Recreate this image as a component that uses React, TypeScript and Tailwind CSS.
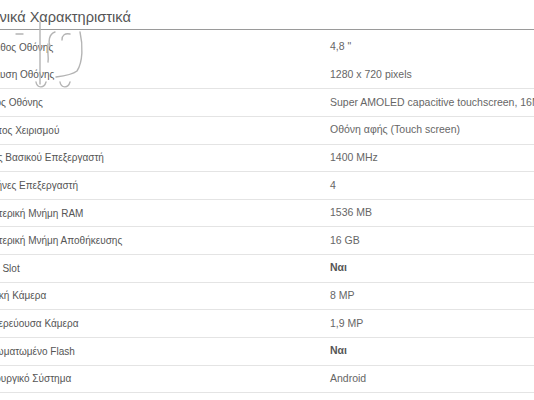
import React from "react";

const rows: { label: string; value: string; bold?: boolean }[] = [
  { label: "Μέγεθος Οθόνης", value: "4,8 \"" },
  { label: "Ανάλυση Οθόνης", value: "1280 x 720 pixels" },
  { label: "Τύπος Οθόνης", value: "Super AMOLED capacitive touchscreen, 16M colors" },
  { label: "Τρόπος Χειρισμού", value: "Οθόνη αφής (Touch screen)" },
  { label: "Ισχύς Βασικού Επεξεργαστή", value: "1400 MHz" },
  { label: "Πυρήνες Επεξεργαστή", value: "4" },
  { label: "Εσωτερική Μνήμη RAM", value: "1536 MB" },
  { label: "Εσωτερική Μνήμη Αποθήκευσης", value: "16 GB" },
  { label: "Card Slot", value: "Ναι", bold: true },
  { label: "Βασική Κάμερα", value: "8 MP" },
  { label: "Δευτερεύουσα Κάμερα", value: "1,9 MP" },
  { label: "Ενσωματωμένο Flash", value: "Ναι", bold: true },
  { label: "Λειτουργικό Σύστημα", value: "Android" },
];

export default function App() {
  return (
    <div className="relative w-[534px] h-[400px] overflow-hidden bg-white font-['Liberation_Sans',Arial,sans-serif]">
      <div className="ml-[-22px] w-[620px]">
        <div className="h-[30px] border-b border-[#9a9a9a] flex items-end pb-[3px]">
          <h2 className="text-[14.6px] leading-[18px] text-[#555]">Τεχνικά Χαρακτηριστικά</h2>
        </div>
        <div className="mt-[4px]">
          {rows.map((r, i) => (
            <div
              key={i}
              className={`grid grid-cols-[352px_1fr] items-center h-[27.64px] ${
                i === 0 ? "border-b border-transparent" : "border-b border-[#e4e4e4]"
              }`}
            >
              <div className="text-[10px] text-[#555] whitespace-nowrap">{r.label}</div>
              <div
                className={`text-[10.5px] whitespace-nowrap ${
                  r.bold ? "font-bold text-[#555]" : "text-[#666]"
                }`}
              >
                {r.value}
              </div>
            </div>
          ))}
        </div>
      </div>
      <svg
        className="absolute left-0 top-0 pointer-events-none"
        width="100"
        height="100"
        viewBox="0 0 100 100"
        fill="none"
      >
        <g stroke="#b4b4b4" strokeWidth="1.4" strokeLinecap="round">
          <path d="M16 34 L23 34" />
          <path d="M40 22 L40 84" />
          <path d="M55 32 C49 34 48 42 50 46" />
          <path d="M62 40 C62 35 65 33 70 34" />
          <path d="M80 32 C83 45 83 62 77 71 C72 75 64 76 56 77" />
          <path d="M48 44 C47 52 49 58 48 62" />
          <path d="M36 82 C37 88 44 89 46 82" />
          <path d="M60 82 C61 88 68 89 70 82" />
        </g>
      </svg>
    </div>
  );
}
